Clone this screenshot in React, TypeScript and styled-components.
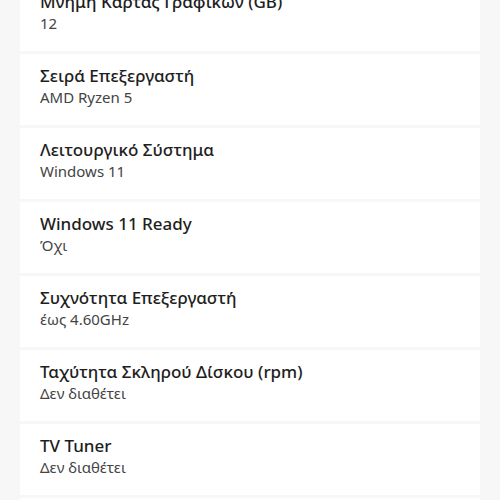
import styled, { createGlobalStyle } from "styled-components";

const GlobalStyle = createGlobalStyle`
  html, body {
    margin: 0;
    padding: 0;
    background: #f7f7f7;
  }

  body {
    font-family: "Noto Sans", Lato, sans-serif;
    overflow: hidden;
  }
`;

const Page = styled.div`
  width: 500px;
  height: 500px;
  overflow: hidden;
  background: #f7f7f7;
`;

const SpecList = styled.ul`
  display: flex;
  flex-direction: column;
  gap: 3px;

  list-style: none;
  margin: -20px 20px 0;
  padding: 0;
`;

const SpecRow = styled.li`
  box-sizing: border-box;
  height: 71px;
  padding: 10px 20px 0;

  background: #ffffff;
`;

const Label = styled.div`
  font-size: 17px;
  line-height: 23px;
  font-weight: 500;

  color: #1e1e1e;
`;

const Value = styled.div`
  font-size: 15px;
  line-height: 21px;

  color: #444444;
`;

const specs = [
  { label: "Μνήμη Κάρτας Γραφικών (GB)", value: "12" },
  { label: "Σειρά Επεξεργαστή", value: "AMD Ryzen 5" },
  { label: "Λειτουργικό Σύστημα", value: "Windows 11" },
  { label: "Windows 11 Ready", value: "Όχι" },
  { label: "Συχνότητα Επεξεργαστή", value: "έως 4.60GHz" },
  { label: "Ταχύτητα Σκληρού Δίσκου (rpm)", value: "Δεν διαθέτει" },
  { label: "TV Tuner", value: "Δεν διαθέτει" },
];

export default function App() {
  return (
    <Page>
      <GlobalStyle />
      <SpecList>
        {specs.map((spec) => (
          <SpecRow key={spec.label}>
            <Label>{spec.label}</Label>
            <Value>{spec.value}</Value>
          </SpecRow>
        ))}
        <SpecRow aria-hidden />
      </SpecList>
    </Page>
  );
}
